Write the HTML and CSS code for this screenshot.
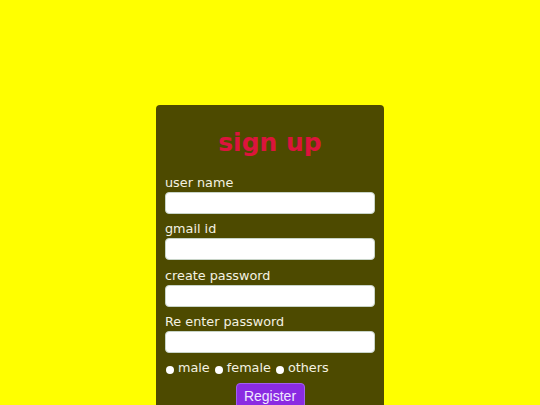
FILE: index.html
```html
<!DOCTYPE html>
<html>
<head>
<meta charset="utf-8">
<link rel="stylesheet" href="styles.css">
</head>
<body>
<div class="page">
  <form class="card">
    <h1 class="title">sign up</h1>
    <label class="label">user name</label>
    <input class="field" type="text">
    <label class="label">gmail id</label>
    <input class="field" type="text">
    <label class="label">create password</label>
    <input class="field" type="password">
    <label class="label">Re enter password</label>
    <input class="field" type="password">
    <div class="radios">
      <input class="radio" type="radio" name="g"><span>male</span>
      <input class="radio" type="radio" name="g"><span>female</span>
      <input class="radio" type="radio" name="g"><span>others</span>
    </div>
    <div class="actions">
      <button class="btn" type="button">Register</button>
    </div>
  </form>
</div>
</body>
</html>
```
FILE: styles.css
```css
html, body {
  margin: 0;
  padding: 0;
  background: #ffff00;
  height: 100%;
  overflow: hidden;
}
.page {
  display: flex;
  justify-content: center;
  padding-top: 105px;
  font-family: "DejaVu Sans", sans-serif;
}
.card {
  width: 210px;
  padding: 0 9px 20px 9px;
  background: #4d4a00;
  border-radius: 4px;
  display: flex;
  flex-direction: column;
}
.title {
  margin: 22px 0 16px 0;
  text-align: center;
  color: #dc143c;
  font-size: 25px;
  font-weight: bold;
  line-height: 32px;
}
.label {
  color: #f4f2e2;
  font-size: 12.8px;
  line-height: 15px;
  margin-bottom: 2px;
}
.field {
  box-sizing: border-box;
  height: 22px;
  width: 210px;
  margin: 0 0 7.3px 0;
  border: 1px solid #c8d4c8;
  border-radius: 4px;
  background: #fff;
  padding: 0 4px;
}
.radios {
  display: flex;
  align-items: center;
  color: #f4f2e2;
  font-size: 12.8px;
  line-height: 15px;
  margin-top: 0;
}
.radio {
  appearance: none;
  -webkit-appearance: none;
  width: 8px;
  height: 8px;
  border-radius: 50%;
  background: #fff;
  margin: 4px 4px 0 1px;
  padding: 0;
  border: none;
}
.radios span {
  margin-right: 4px;
}
.actions {
  display: flex;
  justify-content: center;
  margin-top: 8px;
}
.btn {
  font-family: "Liberation Sans", Arial, sans-serif;
  font-size: 14px;
  color: #f0e8ff;
  background: #8a2be2;
  border: 1px solid #a060f0;
  border-radius: 4px;
  width: 69px;
  height: 26px;
  padding: 0;
}
```
